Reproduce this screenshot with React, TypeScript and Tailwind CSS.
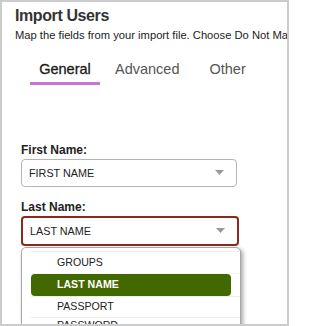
import React from "react";

function Arrow() {
  return (
    <svg width="9" height="5" viewBox="0 0 9 5" className="shrink-0">
      <path d="M0 0 L9 0 L4.5 5 Z" fill="#9a9a9a" />
    </svg>
  );
}

export default function App() {
  return (
    <div
      className="w-[290px] h-[326px] bg-white overflow-hidden"
      style={{ fontFamily: '"Liberation Sans", Arial, sans-serif' }}
    >
      <div className="w-[289px] h-[326px] border-2 border-[#cccccc] overflow-hidden">
        {/* Header */}
        <div className="pl-[13px] pt-[4px]">
          <div className="text-[16px] leading-[20px] font-bold text-[#333333] tracking-[-0.4px]">
            Import Users
          </div>
          <div className="mt-[2px] text-[11.2px] leading-[14px] text-[#222222] whitespace-nowrap">
            Map the fields from your import file. Choose Do Not Map for fields you do not want to import.
          </div>
        </div>

        {/* Tabs */}
        <div className="mt-[18px] pl-[28px] flex items-start text-[14.5px] leading-[18px]">
          <div className="w-[70px] flex flex-col items-center">
            <span className="text-[#1a1a1a] [-webkit-text-stroke:0.3px_#1a1a1a]">General</span>
            <div className="mt-[4px] h-[3px] w-[70px] bg-[#c676d2]" />
          </div>
          <span className="ml-[15px] text-[#555555]">Advanced</span>
          <span className="ml-[30px] text-[#555555]">Other</span>
        </div>

        {/* Form */}
        <div className="pl-[19px] mt-[57px]">
          <div className="text-[12px] leading-[16px] font-bold text-[#222222]">First Name:</div>
          <div className="mt-[1px] w-[216px] h-[28px] border border-[#b5b5b5] rounded-[4px] flex items-center justify-between pl-[7px] pr-[12px]">
            <span className="text-[10.8px] text-[#222222]">FIRST NAME</span>
            <span className="-mt-[2px]"><Arrow /></span>
          </div>

          <div className="mt-[12px] text-[12px] leading-[16px] font-bold text-[#222222]">Last Name:</div>
          <div className="mt-[1px] w-[218px] h-[30px] border-2 border-[#8a2a1c] rounded-[4px] flex items-center justify-between pl-[7px] pr-[12px]">
            <span className="text-[10.8px] text-[#222222]">LAST NAME</span>
            <span className="-mt-[2px]"><Arrow /></span>
          </div>

          {/* Dropdown list */}
          <div className="mt-[1px] w-[220px] h-[90px] border border-[#a8a8a8] rounded-t-[5px] bg-white shadow-[2px_2px_4px_rgba(0,0,0,0.35)] pl-[9px] pt-[3px] text-[10.6px] text-[#222222]">
            <div className="h-px bg-[#ececec]" />
            <div className="h-[21px] flex items-center pl-[26px]">GROUPS</div>
            <div className="h-px bg-[#f4f4f4]" />
            <div className="mr-[9px] h-[22px] flex items-center pl-[26px] bg-[#426900] rounded-[4px] text-white font-bold">
              LAST NAME
            </div>
            <div className="h-px bg-[#ececec]" />
            <div className="h-[20px] flex items-center pl-[26px]">PASSPORT</div>
            <div className="h-px bg-[#ececec]" />
            <div className="h-[16px] flex items-center pl-[26px]">PASSWORD</div>
          </div>
        </div>
      </div>
    </div>
  );
}
